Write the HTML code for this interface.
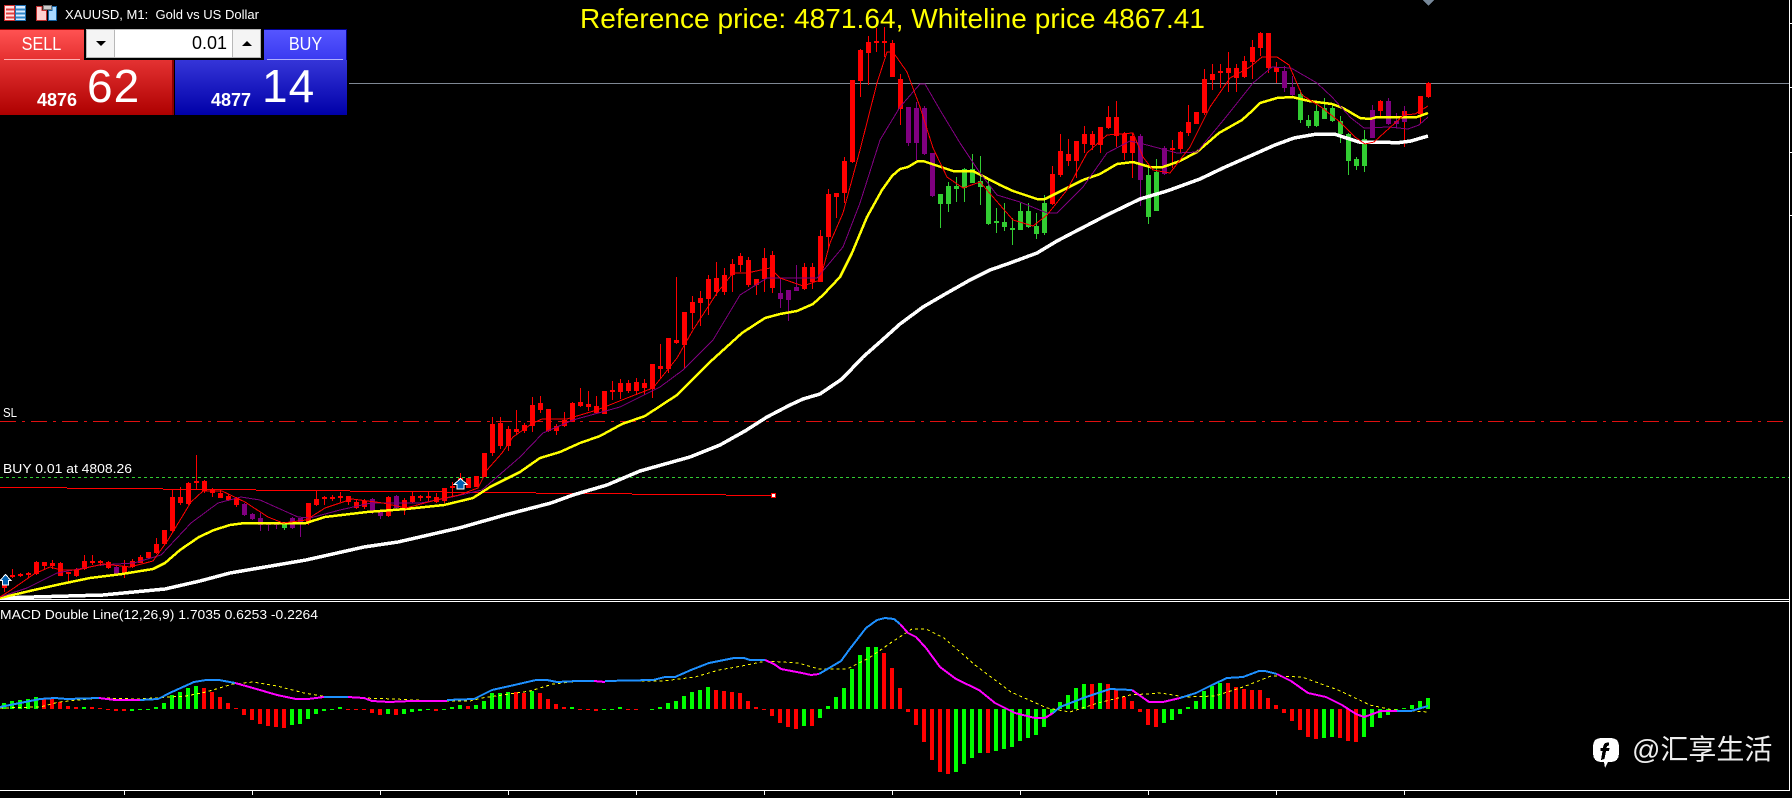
<!DOCTYPE html>
<html><head><meta charset="utf-8"><title>XAUUSD, M1</title>
<style>
html,body{margin:0;padding:0;background:#000;width:1792px;height:798px;overflow:hidden}
#c{position:absolute;left:0;top:0}
.a{position:absolute;box-sizing:border-box;white-space:nowrap;font-family:"Liberation Sans",sans-serif;color:#fff}
</style></head><body>
<svg id="c" width="1792" height="798" viewBox="0 0 1792 798" xmlns="http://www.w3.org/2000/svg" fill="none">
<g shape-rendering="crispEdges">
<path d="M349 83.5H1789" stroke="#7f8894"/>
<path d="M0 477.5H1789" stroke="#32cd32" stroke-dasharray="3 3"/>
<path d="M0 421.5H1789" stroke="#e01010" stroke-dasharray="16 6 3 6"/>
<path d="M1423 0H1434L1428.5 6Z" fill="#778899"/>
<path d="M0 599.5H1789M0 601.5H1789M0 790.5H1789M1789.5 0V791M1789 23.5H1792M1789 87.5H1792M1789 152.5H1792M1789 215.5H1792M124.5 790V795M252.5 790V795M380.5 790V795M508.5 790V795M636.5 790V795M764.5 790V795M892.5 790V795M1020.5 790V795M1148.5 790V795M1276.5 790V795M1404.5 790V795" stroke="#fff"/>
<!-- red wicks -->
<path stroke="#f00" d="M4.5 583V592M12.5 569V578M20.5 573V577M28.5 572V578M36.5 561V575M44.5 562V569M52.5 560V569M60.5 562V576M68.5 572V583M76.5 568V577M84.5 555V570M92.5 555V565M100.5 560V566M108.5 561V569M124.5 560V578M132.5 559V568M140.5 555V563M148.5 552V559M156.5 538V554M164.5 530V545M172.5 490V532M180.5 487V505M188.5 482V505M196.5 455V489M204.5 480V493M212.5 488V497M220.5 490V498M228.5 494V501M236.5 497V507M308.5 503V525M316.5 491V506M324.5 496V505M332.5 495V501M340.5 492V502M348.5 496V505M356.5 500V509M364.5 499V509M388.5 496V517M404.5 498V515M412.5 492V503M420.5 495V501M428.5 492V502M436.5 493V503M444.5 488V503M452.5 482V497M460.5 473V488M468.5 478V488M476.5 476V487M484.5 453V477M492.5 417V456M500.5 417V449M508.5 426V451M516.5 410V434M524.5 423V433M532.5 397V432M540.5 396V413M548.5 409V432M556.5 424V435M564.5 412V427M572.5 402V422M580.5 388V407M588.5 391V411M596.5 396V414M604.5 391V414M612.5 381V400M620.5 379V399M628.5 380V393M636.5 378V395M644.5 379V395M652.5 364V398M660.5 344V378M668.5 338V373M676.5 277V344M684.5 312V368M692.5 296V329M700.5 291V326M708.5 275V315M716.5 262V296M724.5 268V295M732.5 259V292M740.5 253V272M748.5 257V287M756.5 279V295M764.5 248V292M772.5 251V293M804.5 263V290M812.5 263V289M820.5 230V282M828.5 189V248M836.5 193V218M844.5 157V203M852.5 80V163M860.5 49V97M868.5 36V85M876.5 28V52M884.5 27V57M892.5 40V77M900.5 74V125M1052.5 166V205M1060.5 134V177M1068.5 139V166M1076.5 141V178M1084.5 126V153M1092.5 131V150M1100.5 127V153M1108.5 106V129M1116.5 101V147M1124.5 132V160M1132.5 133V178M1172.5 140V168M1180.5 131V153M1188.5 105V136M1196.5 112V124M1204.5 69V115M1212.5 64V90M1220.5 64V88M1228.5 52V92M1236.5 64V92M1244.5 56V78M1252.5 40V79M1260.5 32V56M1268.5 33V73M1276.5 62V83M1380.5 100V117M1404.5 108V147M1420.5 96V123M1428.5 82V98"/>
<!-- red bodies -->
<path stroke="#f00" stroke-width="5" d="M4.5 583V588M12.5 575V577M20.5 574V576M28.5 573V575M36.5 562V574M44.5 562V566M52.5 563V566M60.5 563V576M68.5 572V574M76.5 570V576M84.5 561V569M92.5 561V563M100.5 561V563M108.5 562V568M124.5 566V574M132.5 561V567M140.5 557V563M148.5 552V558M156.5 544V553M164.5 530V544M172.5 497V531M180.5 497V503M188.5 483V504M196.5 481V483M204.5 481V491M212.5 489V493M220.5 493V498M228.5 496V500M236.5 498V505M308.5 503V523M316.5 499V505M324.5 497V499M332.5 497V499M340.5 496V498M348.5 496V502M356.5 502V508M364.5 501V507M388.5 497V516M404.5 500V508M412.5 496V502M420.5 496V498M428.5 496V498M436.5 497V502M444.5 488V501M452.5 486V488M460.5 478V488M468.5 478V488M476.5 476V487M484.5 453V477M492.5 424V453M500.5 423V446M508.5 429V446M516.5 429V432M524.5 425V431M532.5 405V426M540.5 403V410M548.5 409V431M556.5 426V431M564.5 420V426M572.5 403V422M580.5 402V406M588.5 404V407M596.5 406V413M604.5 391V414M612.5 390V392M620.5 383V392M628.5 383V391M636.5 382V391M644.5 383V388M652.5 364V389M660.5 366V369M668.5 338V369M676.5 340V343M684.5 312V345M692.5 302V313M700.5 298V303M708.5 279V299M716.5 278V292M724.5 275V292M732.5 264V275M740.5 256V265M748.5 260V285M756.5 279V285M764.5 258V279M772.5 255V288M804.5 267V289M812.5 267V282M820.5 236V282M828.5 194V237M836.5 193V197M844.5 161V193M852.5 80V162M860.5 50V81M868.5 42V53M876.5 41V43M884.5 41V43M892.5 43V77M900.5 79V109M1052.5 174V204M1060.5 151V175M1068.5 154V161M1076.5 141V161M1084.5 134V144M1092.5 134V145M1100.5 127V145M1108.5 117V128M1116.5 117V136M1124.5 134V153M1132.5 136V153M1172.5 148V150M1180.5 132V149M1188.5 122V133M1196.5 112V124M1204.5 79V113M1212.5 74V80M1220.5 71V73M1228.5 68V73M1236.5 68V78M1244.5 61V77M1252.5 47V62M1260.5 33V48M1268.5 33V68M1276.5 67V72M1380.5 101V111M1404.5 111V116M1420.5 96V114M1428.5 83V97"/>
<!-- purple -->
<path stroke="#800080" d="M116.5 565V575M244.5 503V516M252.5 513V520M260.5 513V531M268.5 523V531M276.5 523V529M292.5 517V529M300.5 518V537M372.5 498V514M380.5 510V519M396.5 495V509M780.5 278V308M788.5 290V321M796.5 265V291M908.5 107V146M916.5 102V160M924.5 106V155M932.5 153V197M1140.5 134V206M1164.5 146V175M1284.5 66V92M1292.5 76V96M1372.5 105V138M1388.5 98V125M1396.5 113V128M1404.5 106V122"/>
<path stroke="#800080" stroke-width="5" d="M116.5 567V574M244.5 504V515M252.5 514V519M260.5 518V525M268.5 523V525M276.5 523V525M292.5 518V528M300.5 518V524M372.5 499V511M380.5 512V516M396.5 496V508M780.5 293V299M788.5 290V300M796.5 287V291M908.5 107V143M916.5 108V143M924.5 108V154M932.5 153V196M1140.5 136V180M1164.5 148V174M1284.5 71V88M1292.5 87V95M1372.5 110V138M1388.5 101V124M1396.5 121V124M1404.5 115V122"/>
<!-- green -->
<path stroke="#32cd32" d="M284.5 522V530M940.5 194V228M948.5 182V212M956.5 177V202M964.5 168V202M972.5 154V183M980.5 156V205M988.5 180V225M996.5 208V233M1004.5 203V231M1012.5 218V245M1020.5 203V230M1028.5 203V228M1036.5 213V239M1044.5 195V235M1148.5 168V224M1156.5 159V211M1300.5 90V123M1308.5 115V128M1316.5 105V127M1324.5 98V119M1332.5 105V122M1340.5 116V143M1348.5 133V175M1356.5 157V170M1364.5 130V172"/>
<path stroke="#32cd32" stroke-width="5" d="M284.5 523V528M940.5 194V204M948.5 186V204M956.5 186V189M964.5 169V188M972.5 169V183M980.5 181V187M988.5 186V224M996.5 221V223M1004.5 222V227M1012.5 228V230M1020.5 211V230M1028.5 211V227M1036.5 226V234M1044.5 203V233M1148.5 175V217M1156.5 172V211M1300.5 94V120M1308.5 120V126M1316.5 111V126M1324.5 108V119M1332.5 108V121M1340.5 121V134M1348.5 134V161M1356.5 159V166M1364.5 139V166"/>
<!-- trend line -->
<path stroke="#f00" d="M0 487.5H67M67 488.5H163M163 489.5H256M256 490.5H350M350 491.5H442M442 492.5H536M536 493.5H632M632 494.5H726M726 495.5H772"/>
<rect x="771.500" y="493.500" width="4" height="4" fill="#fff" stroke="#f00"/>
<!-- white MA -->
<path stroke="#fff" stroke-width="3.500" stroke-linejoin="round" d="M0 598L103 595L165 589L200 581L230 573L306 560L364 547L398 542L459 528L505 515L551 503L573 495L607 485L640 471L690 457L720 445L745 431L767 417L790 405L803 399L820 394L842 379L863 357L880 342L900 324L923 307L947 293L970 280L990 270L1010 263L1037 253L1057 241L1080 229L1107 215L1140 199L1167 191L1200 179L1223 168L1257 153L1275 145L1294 138L1317 134L1334 134L1359 142L1385 142L1396 143L1411 141L1428 136"/>
<!-- yellow MA -->
<path stroke="#ff0" stroke-width="2.500" stroke-linejoin="round" d="M0 598L34 590L61 584L90 578L122 574L153 569L165 563L180 550L199 537L214 530L230 525L245 523L306 523L325 517L367 512L406 509L444 505L473 498L490 487L520 472L540 458L560 452L580 443L600 436L622 424L645 416L677 395L710 362L742 333L765 318L780 314L797 311L813 304L823 295L840 277L852 253L867 217L882 190L892 176L900 169L908 167L918 161L923 161L953 171L973 171L1000 185L1013 191L1037 199L1045 199L1083 180L1100 174L1117 164L1133 162L1150 167L1163 167L1180 161L1197 152L1219 133L1242 120L1252 111L1260 103L1277 98L1292 97L1309 101L1332 104L1343 108L1360 118L1370 119L1377 117L1417 117L1428 113"/>
<!-- purple MA -->
<path stroke="#800080" d="M0 597L27 588L57 573L100 565L134 563L161 555L191 523L218 503L241 497L260 500L298 517L310 518L340 510L371 503L421 503L452 497L482 490L520 457L543 433L573 420L620 407L660 387L683 370L713 340L740 295L767 278L817 278L843 247L860 203L880 140L900 107L920 84L925 84L940 110L960 143L980 173L997 195L1020 202L1047 213L1057 213L1083 187L1107 153L1130 141L1147 145L1177 153L1197 152L1226 117L1253 83L1272 67L1291 68L1317 83L1332 97L1351 118L1364 128L1389 127L1408 129L1419 125L1428 117"/>
<!-- red MA -->
<path stroke="#f00" d="M0 597L11 590L34 574L50 567L61 570L77 570L103 564L130 567L153 561L168 540L191 502L203 491L222 491L245 502L268 517L283 523L306 520L325 508L352 499L383 503L406 508L436 500L459 495L478 488L487 470L502 453L513 437L533 423L542 419L567 419L597 410L627 398L653 388L677 358L693 330L717 293L733 273L747 273L770 268L780 278L803 286L820 280L830 243L843 213L860 150L877 83L887 52L893 52L907 72L920 107L933 148L947 177L963 188L980 182L993 197L1013 220L1033 226L1047 215L1067 190L1087 153L1107 135L1133 133L1143 157L1153 170L1170 173L1190 147L1210 107L1230 78L1250 67L1262 57L1277 57L1289 65L1302 95L1321 107L1340 122L1355 137L1365 144L1374 142L1385 132L1404 115L1415 114L1428 106"/>
<!-- arrows -->
<path d="M5.500 574.500L11 580.500H8.500V585H2.500V580.500H0Z" fill="#0060b0" stroke="#fff"/>
<path d="M460.500 478.500L467 484.500H464V489H457V484.500H454Z" fill="#0060b0" stroke="#fff"/>
<!-- histogram green -->
<path stroke="#00ff00" stroke-width="4" d="M4 703V709M12 701V709M20 700V709M28 699V709M36 697V709M84 707V709M132 709V711M140 709V710M148 709V710M156 707V709M164 703V709M172 695V709M180 692V709M188 688V709M196 686V709M292 709V725M300 709V724M308 709V719M316 709V714M324 709V711M332 709V710M340 707V709M388 709V714M404 709V714M412 709V712M420 709V711M428 709V710M444 709V710M452 707V709M460 705V709M476 705V709M484 701V709M492 693V709M500 693V709M508 692V709M532 691V709M572 707V709M604 709V710M612 709V710M620 707V709M652 709V710M660 707V709M668 703V709M676 701V709M684 696V709M692 692V709M700 690V709M708 687V709M804 709V726M820 709V718M828 706V709M836 697V709M844 688V709M852 669V709M860 655V709M868 647V709M876 647V709M956 709V772M964 709V764M972 709V758M980 709V753M996 709V751M1004 709V749M1012 709V747M1020 709V741M1028 709V738M1036 709V735M1044 709V727M1052 709V714M1060 702V709M1068 695V709M1076 688V709M1084 684V709M1100 683V709M1164 709V723M1172 709V720M1180 709V714M1188 707V709M1196 701V709M1204 691V709M1212 686V709M1220 683V709M1324 709V738M1332 709V737M1364 709V737M1372 709V727M1380 709V718M1388 709V715M1396 709V710M1404 708V709M1412 705V709M1420 701V709M1428 698V709"/>
<!-- histogram red -->
<path stroke="#f00" stroke-width="4" d="M44 698V709M52 699V709M60 702V709M68 706V709M76 707V709M92 707V709M100 708V709M108 709V710M116 709V711M124 709V711M204 688V709M212 692V709M220 697V709M228 703V709M236 708V709M244 709V715M252 709V720M260 709V724M268 709V726M276 709V727M284 709V728M348 709V710M356 709V710M364 709V710M372 709V713M380 709V715M396 709V715M436 709V711M468 706V709M516 692V709M524 693V709M540 693V709M548 699V709M556 704V709M564 707V709M580 709V710M588 709V710M596 709V711M628 709V710M636 709V710M716 690V709M724 691V709M732 692V709M740 693V709M748 701V709M756 707V709M764 709V710M772 709V716M780 709V723M788 709V727M796 709V729M812 709V726M884 653V709M892 668V709M900 688V709M908 709V712M916 709V725M924 709V742M932 709V760M940 709V772M948 709V774M988 709V753M1092 684V709M1108 684V709M1116 690V709M1124 697V709M1132 701V709M1140 709V712M1148 709V725M1156 709V727M1228 683V709M1236 687V709M1244 689V709M1252 690V709M1260 690V709M1268 698V709M1276 705V709M1284 709V713M1292 709V721M1300 709V730M1308 709V737M1316 709V739M1340 709V738M1348 709V741M1356 709V742"/>
<!-- signal -->
<path stroke="#ff0" stroke-dasharray="3 3" d="M0 708L40 707L59 702L79 700L103 698L138 699L186 696L206 692L233 684L253 682L277 686L304 693L328 697L395 699L435 701L470 701L482 698L530 691L553 684L581 681L663 681L695 677L719 670L742 666L766 661L798 663L819 669L847 669L869 658L892 642L912 629L926 629L944 638L975 665L1011 692L1047 708L1070 712L1098 703L1130 695L1161 693L1185 697L1215 696L1243 687L1271 676L1302 677L1338 690L1370 705L1393 710L1429 712"/>
<!-- macd line -->
<path stroke="#1e90ff" stroke-width="2" d="M0 707L20 703L40 699L55 698L67 699L99 698M140 700L158 699L164 696L174 691L194 682L206 680L219 680L235 683M324 697L348 697M447 700L474 699L492 690L510 686L536 680L547 680L557 682L577 681L594 681M605 681L653 680L665 677L675 677L691 670L709 663L734 658L744 658L750 660L765 660M819 674L841 661L849 650L866 628L877 620L885 618L894 619L900 624M1053 713L1060 707L1086 697L1110 689L1132 690M1180 698L1196 693L1212 685L1227 678L1243 677L1259 671L1265 671L1277 674M1397 711L1411 711L1428 706"/>
<path stroke="#ff00ff" stroke-width="2" d="M99 698L115 700L140 700M235 683L253 688L277 695L296 699L308 699L324 697M348 697L364 698L372 701L389 702L411 701L429 701L447 701M594 681L605 682M765 660L774 664L781 669L802 673L811 675L819 674M900 624L908 633L916 637L926 648L940 667L956 679L979 690L995 703L1015 713L1035 718L1045 718L1053 713M1132 690L1149 702L1163 702L1180 698M1277 674L1291 681L1308 693L1326 697L1342 705L1356 714L1364 717L1381 711L1397 711"/>
<!-- top icons -->
<rect x="4.500" y="5.500" width="10" height="15" fill="#ffe4e4" stroke="#d03030"/>
<rect x="15.500" y="5.500" width="10" height="15" fill="#d8ecff" stroke="#2070b0"/>
<path d="M6 9.500H14M6 13.500H14M6 17.500H14" stroke="#e04040" stroke-width="2"/>
<path d="M16 9.500H25M16 13.500H25M16 17.500H25" stroke="#2e86c8" stroke-width="2"/>
<path d="M36.500 6.500H42V10.500H46.500V20.500H36.500Z" fill="#ffd0d0" stroke="#c03030"/>
<path d="M48.500 10.500H52V6.500H56.500V20.500H48.500Z" fill="#a8d8ff" stroke="#1560a0"/>
<rect x="43.500" y="5.500" width="8" height="4" fill="#ccc" stroke="#777"/>
<!-- fb icon -->
<path d="M1601 738H1611C1616 738 1619 741 1619 746V753C1619 759 1616 762 1611 762H1608L1605 768L1604 762H1601C1596 762 1593 759 1593 753V746C1593 741 1596 738 1601 738Z" fill="#fff"/>
<path d="M1609 742.500C1604 742 1603.500 745 1603 748H1600.500V751H1602.500L1601 760L1604.500 759L1606 751H1609L1609.500 748H1606.500C1606.800 746 1607.500 745.500 1609 745.500Z" fill="#000"/>
</g>
<text x="580" y="28" fill="#ff0" font-family="Liberation Sans,sans-serif" font-size="28" textLength="625">Reference price: 4871.64, Whiteline price 4867.41</text>
<g fill="#fff" font-family="Liberation Sans,sans-serif" font-size="13">
<text x="65" y="19" textLength="194" lengthAdjust="spacingAndGlyphs" style="white-space:pre">XAUUSD, M1:  Gold vs US Dollar</text>
<text x="3" y="417" textLength="14" lengthAdjust="spacingAndGlyphs">SL</text>
<text x="3" y="473" textLength="129" lengthAdjust="spacingAndGlyphs">BUY 0.01 at 4808.26</text>
<text x="0" y="619" textLength="318" lengthAdjust="spacingAndGlyphs">MACD Double Line(12,26,9) 1.7035 0.6253 -0.2264</text>
</g>
<text x="1632" y="759" fill="#eee" font-family="Liberation Sans,Noto Sans CJK SC,sans-serif" font-size="28">@汇享生活</text>
</svg>

<div class="a" style="left:0;top:29px;width:84px;height:31px;background:linear-gradient(#ff5252,#e53030);border-top:1px solid #a00000;"></div>
<div class="a" style="left:0;top:60px;width:174px;height:55px;background:linear-gradient(#e43232,#ae0000);border-right:2px solid #8b0000;"></div>
<div class="a" style="left:4px;top:59px;width:76px;height:1px;background:#ffb0b0"></div>
<div class="a" style="left:0;top:32px;width:83px;text-align:center;font-size:18px;line-height:24px;transform:scaleX(.9)">SELL</div>
<div class="a" style="left:37px;top:90px;font-size:18px;line-height:20px;font-weight:bold">4876</div>
<div class="a" style="left:87px;top:60px;font-size:46px;line-height:52px;letter-spacing:1px">62</div>

<div class="a" style="left:86px;top:29px;width:175px;height:29px;background:#fff;border:1px solid #c0c0c0"></div>
<div class="a" style="left:86px;top:29px;width:29px;height:29px;background:#f4f4f4;border:1px solid #b8b8b8"></div>
<div class="a" style="left:232px;top:29px;width:29px;height:29px;background:#f4f4f4;border:1px solid #b8b8b8"></div>
<svg class="a" style="left:86px;top:29px" width="175" height="29"><path d="M10 12H20L15 17Z" fill="#000"/><path d="M156 17H166L161 12Z" fill="#000"/></svg>
<div class="a" style="left:115px;top:31px;width:112px;text-align:right;font-size:18px;line-height:25px;color:#000">0.01</div>

<div class="a" style="left:264px;top:29px;width:83px;height:31px;background:linear-gradient(#5555ff,#3a3af0);border-top:1px solid #000090;border-right:1px solid #000090"></div>
<div class="a" style="left:175px;top:60px;width:172px;height:55px;background:linear-gradient(#3535d8,#0000a8)"></div>
<div class="a" style="left:267px;top:59px;width:76px;height:1px;background:#b0b0ff"></div>
<div class="a" style="left:264px;top:32px;width:83px;text-align:center;font-size:18px;line-height:24px;transform:scaleX(.9)">BUY</div>
<div class="a" style="left:211px;top:90px;font-size:18px;line-height:20px;font-weight:bold">4877</div>
<div class="a" style="left:262px;top:60px;font-size:46px;line-height:52px;letter-spacing:1px">14</div>
</body></html>
